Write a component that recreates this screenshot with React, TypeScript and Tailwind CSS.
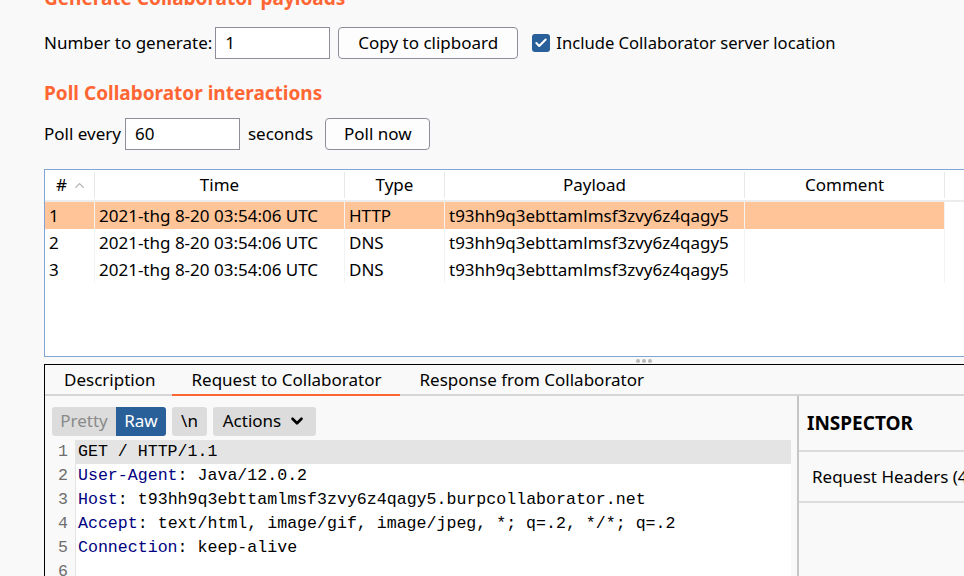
import { ChevronUp, ChevronDown, Check } from 'lucide-react'

const rows = [
  { n: 1, time: '2021-thg 8-20 03:54:06 UTC', type: 'HTTP', payload: 't93hh9q3ebttamlmsf3zvy6z4qagy5', active: true },
  { n: 2, time: '2021-thg 8-20 03:54:06 UTC', type: 'DNS', payload: 't93hh9q3ebttamlmsf3zvy6z4qagy5', active: false },
  { n: 3, time: '2021-thg 8-20 03:54:06 UTC', type: 'DNS', payload: 't93hh9q3ebttamlmsf3zvy6z4qagy5', active: false },
]

const code: [string, string][] = [
  ['', 'GET / HTTP/1.1'],
  ['User-Agent', ' Java/12.0.2'],
  ['Host', ' t93hh9q3ebttamlmsf3zvy6z4qagy5.burpcollaborator.net'],
  ['Accept', ' text/html, image/gif, image/jpeg, *; q=.2, */*; q=.2'],
  ['Connection', ' keep-alive'],
  ['', ''],
]

function TextBox({ value, w }: { value: string; w: string }) {
  return (
    <div className={`${w} h-[32px] border border-[#8e8e9a] bg-white flex items-center px-[9px]`}>{value}</div>
  )
}

function Button({ label, w }: { label: string; w: string }) {
  return (
    <div className={`${w} h-[32px] rounded-[4px] border border-[#8e8e9a] bg-[#fdfdfd] flex items-center justify-center`}>
      {label}
    </div>
  )
}

export default function App() {
  return (
    <div className="w-[964px] h-[576px] overflow-hidden bg-[#f9f9f9] text-[17px] text-black" style={{ fontFamily: '"Noto Sans", "Open Sans", sans-serif' }}>
      <div className="pl-[44px]">
        <h2 className="-mt-[15px] h-[26px] text-[19px] font-bold text-[#ff6633] leading-[26px] whitespace-nowrap">Generate Collaborator payloads</h2>

        <div className="mt-[16px] flex items-center h-[32px] whitespace-nowrap">
          <span className="mr-[3px]">Number to generate:</span>
          <TextBox value="1" w="w-[115px]" />
          <div className="ml-[8px]"><Button label="Copy to clipboard" w="w-[180px]" /></div>
          <div className="ml-[14px] w-[18px] h-[18px] rounded-[3px] bg-[#2a6099] flex items-center justify-center">
            <Check size={14} strokeWidth={3.5} color="white" />
          </div>
          <span className="ml-[6px] text-[16.6px]">Include Collaborator server location</span>
        </div>

        <h2 className="mt-[21px] h-[26px] text-[19px] font-bold text-[#ff6633] leading-[26px]">Poll Collaborator interactions</h2>

        <div className="mt-[12px] flex items-center h-[32px] whitespace-nowrap">
          <span className="mr-[4px]">Poll every</span>
          <TextBox value="60" w="w-[115px]" />
          <span className="ml-[8px]">seconds</span>
          <div className="ml-[12px]"><Button label="Poll now" w="w-[105px]" /></div>
        </div>

        <div className="mt-[19px] w-[940px] h-[188px] border border-[#7fa6d6] bg-white whitespace-nowrap">
          <div className="flex h-[32px] border-b-2 border-[#ececec]">
            <div className="w-[50px] flex items-center pl-[11px] border-r border-[#e8e8e8] my-[2px]">
              <span>#</span>
              <ChevronUp size={15} className="ml-[5px] text-[#b0b0b0]" />
            </div>
            <div className="w-[250px] flex items-center justify-center border-r border-[#e8e8e8] my-[2px]">Time</div>
            <div className="w-[100px] flex items-center justify-center border-r border-[#e8e8e8] my-[2px]">Type</div>
            <div className="w-[300px] flex items-center justify-center border-r border-[#e8e8e8] my-[2px]">Payload</div>
            <div className="w-[200px] flex items-center justify-center border-r border-[#e8e8e8] my-[2px]">Comment</div>
            <div className="flex-1" />
          </div>
          {rows.map((r) => (
            <div key={r.n} className="flex h-[27px] items-center">
              <div className={`flex h-full items-center ${r.active ? 'bg-[#ffc598]' : ''}`}>
                <div className="w-[50px] pl-[4px] border-r border-[#f3f3f3] h-full flex items-center">{r.n}</div>
                <div className="w-[250px] pl-[4px] border-r border-[#f3f3f3] h-full flex items-center">{r.time}</div>
                <div className="w-[100px] pl-[4px] border-r border-[#f3f3f3] h-full flex items-center">{r.type}</div>
                <div className="w-[300px] pl-[4px] border-r border-[#f3f3f3] h-full flex items-center">{r.payload}</div>
                <div className="w-[200px] border-r border-[#f3f3f3] h-full" />
              </div>
            </div>
          ))}
        </div>

        <div className="h-[7px] w-[940px] flex items-center justify-start pl-[592px]">
          <div className="flex gap-[2px]">
            <div className="w-[4px] h-[4px] rounded-full bg-[#b8b8b8]" />
            <div className="w-[4px] h-[4px] rounded-full bg-[#b8b8b8]" />
            <div className="w-[4px] h-[4px] rounded-full bg-[#b8b8b8]" />
          </div>
        </div>

        <div className="w-[940px] h-[220px] border-t border-l border-black bg-[#f9f9f9] flex flex-col whitespace-nowrap">
          <div className="flex h-[34px] border-b-2 border-[#d6d6d6]">
            <div className="pl-[19px] pr-[17px] flex items-center">Description</div>
            <div className="px-[19px] flex items-center border-b-2 border-[#ff6633] -mb-[2px]">Request to Collaborator</div>
            <div className="px-[19px] flex items-center">Response from Collaborator</div>
          </div>
          <div className="flex flex-1">
            <div className="w-[752px] flex flex-col">
              <div className="flex items-center gap-[6px] pl-[7px] pt-[6px] h-[44px]">
                <div className="flex h-[29px] rounded-[3px] overflow-hidden">
                  <div className="w-[64px] bg-[#dcdcdc] text-[#8a8a8a] flex items-center justify-center">Pretty</div>
                  <div className="w-[50px] bg-[#2a6099] text-white flex items-center justify-center">Raw</div>
                </div>
                <div className="w-[35px] h-[29px] rounded-[3px] bg-[#dcdcdc] flex items-center justify-center">\n</div>
                <div className="w-[103px] h-[29px] rounded-[3px] bg-[#dcdcdc] flex items-center justify-center gap-[7px]">
                  Actions
                  <ChevronDown size={18} strokeWidth={3.5} />
                </div>
              </div>
              <div className="flex-1 bg-white mr-[6px]" style={{ fontFamily: '"Liberation Mono", "DejaVu Sans Mono", monospace' }}>
                {code.map(([k, v], i) => (
                  <div key={i} className="flex h-[24px] items-center text-[16.6px]">
                    <div className="w-[30px] pr-[7px] text-right text-[#6e6e6e] bg-[#f9f9f9] h-full flex items-center justify-end">{i + 1}</div>
                    <div className={`flex-1 h-full flex items-center pl-[2px] border-l border-[#e4e4e4] whitespace-pre ${i === 0 ? 'bg-[#e4e4e4]' : ''}`}>
                      {k && <span className="text-[#000080]">{k}</span>}
                      {k ? ':' : ''}
                      {v}
                    </div>
                  </div>
                ))}
              </div>
            </div>
            <div className="flex-1 border-l-2 border-[#c6c6c6] bg-[#f9f9f9]">
              <div className="h-[56px] flex items-center pl-[8px] border-b-2 border-[#dcdcdc] text-[19px] font-bold">INSPECTOR</div>
              <div className="h-[51px] flex items-center pl-[13px] border-b-2 border-[#dcdcdc] whitespace-nowrap">Request Headers (4)</div>
            </div>
          </div>
        </div>
      </div>
    </div>
  )
}
